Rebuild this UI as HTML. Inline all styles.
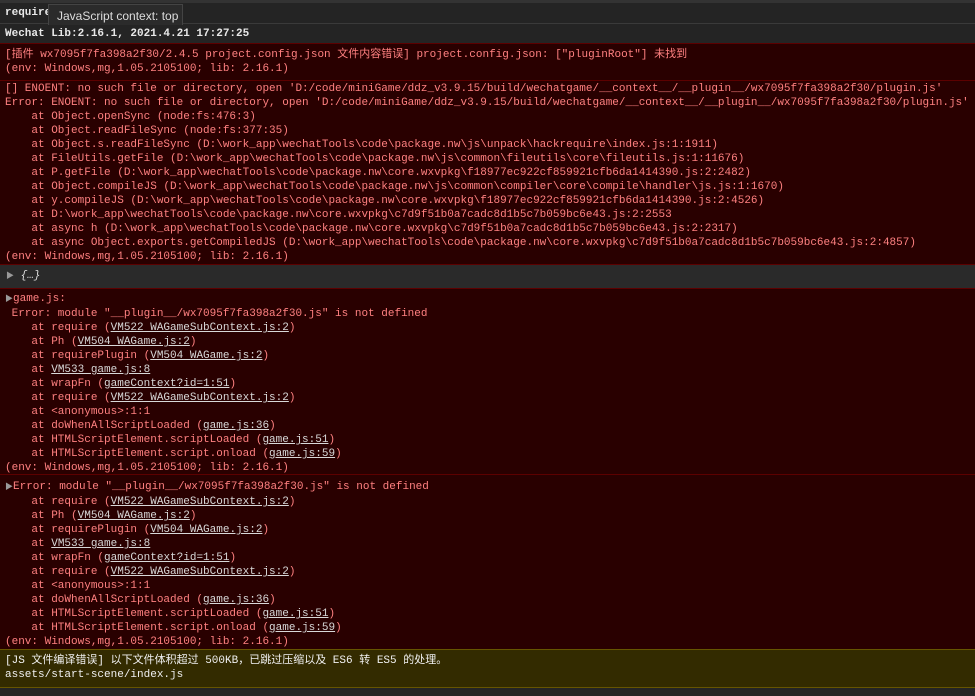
<!DOCTYPE html>
<html><head><meta charset="utf-8"><style>
body{margin:0;width:975px;height:696px;background:#242424;overflow:hidden;font-family:"Liberation Mono","Noto Sans CJK SC",monospace;font-size:11px;position:relative}
.r{position:absolute;left:0;width:975px;box-sizing:border-box}
pre{margin:0;font:inherit;line-height:14px;white-space:pre}
.err{background:#290000;color:#ff8080;border-top:1px solid #5c0000}
u{color:#d8d8d8;text-decoration:underline}
.tri{color:#999;font-size:8px}
</style></head><body>
<div class="r" style="top:0;height:3px;background:#333"></div>
<div class="r" style="top:3px;height:21px;background:#242424;border-bottom:1px solid #3a3a3a"><pre style="color:#e8e8e8;padding:3px 0 0 5px;font-weight:bold">require</pre></div>
<div style="position:absolute;left:48px;top:4px;width:135px;height:24px;background:#2b2b2b;border:1px solid #444;box-sizing:border-box;color:#ddd;font-family:'Liberation Sans',sans-serif;font-size:12px;line-height:22px;padding-left:8px">JavaScript context: top</div>
<div class="r" style="top:25px;height:18px;background:#242424"><pre style="color:#e8e8e8;padding:2px 0 0 5px;font-weight:bold">Wechat Lib:2.16.1, 2021.4.21 17:27:25</pre></div>
<div class="r err" style="top:43px;height:37px;padding:4px 0 0 5px"><pre>[插件 wx7095f7fa398a2f30/2.4.5 project.config.json 文件内容错误] project.config.json: ["pluginRoot"] 未找到
(env: Windows,mg,1.05.2105100; lib: 2.16.1)</pre></div>
<div class="r err" style="top:80px;height:184px;padding:1px 0 0 5px"><pre>[] ENOENT: no such file or directory, open 'D:/code/miniGame/ddz_v3.9.15/build/wechatgame/__context__/__plugin__/wx7095f7fa398a2f30/plugin.js'
Error: ENOENT: no such file or directory, open 'D:/code/miniGame/ddz_v3.9.15/build/wechatgame/__context__/__plugin__/wx7095f7fa398a2f30/plugin.js'
    at Object.openSync (node:fs:476:3)
    at Object.readFileSync (node:fs:377:35)
    at Object.s.readFileSync (D:\work_app\wechatTools\code\package.nw\js\unpack\hackrequire\index.js:1:1911)
    at FileUtils.getFile (D:\work_app\wechatTools\code\package.nw\js\common\fileutils\core\fileutils.js:1:11676)
    at P.getFile (D:\work_app\wechatTools\code\package.nw\core.wxvpkg\f18977ec922cf859921cfb6da1414390.js:2:2482)
    at Object.compileJS (D:\work_app\wechatTools\code\package.nw\js\common\compiler\core\compile\handler\js.js:1:1670)
    at y.compileJS (D:\work_app\wechatTools\code\package.nw\core.wxvpkg\f18977ec922cf859921cfb6da1414390.js:2:4526)
    at D:\work_app\wechatTools\code\package.nw\core.wxvpkg\c7d9f51b0a7cadc8d1b5c7b059bc6e43.js:2:2553
    at async h (D:\work_app\wechatTools\code\package.nw\core.wxvpkg\c7d9f51b0a7cadc8d1b5c7b059bc6e43.js:2:2317)
    at async Object.exports.getCompiledJS (D:\work_app\wechatTools\code\package.nw\core.wxvpkg\c7d9f51b0a7cadc8d1b5c7b059bc6e43.js:2:4857)
(env: Windows,mg,1.05.2105100; lib: 2.16.1)</pre></div>
<div class="r" style="top:264px;height:24px;background:#2a2a2a;border-top:1px solid #5c0000;padding:4px 0 0 6px"><pre style="color:#ddd"><span class="tri">▶</span> <i>{…}</i></pre></div>
<div class="r err" style="top:288px;height:186px;padding:3px 0 0 5px"><pre><span class="tri">▶</span>game.js:
 Error: module "__plugin__/wx7095f7fa398a2f30.js" is not defined
    at require (<u>VM522 WAGameSubContext.js:2</u>)
    at Ph (<u>VM504 WAGame.js:2</u>)
    at requirePlugin (<u>VM504 WAGame.js:2</u>)
    at <u>VM533 game.js:8</u>
    at wrapFn (<u>gameContext?id=1:51</u>)
    at require (<u>VM522 WAGameSubContext.js:2</u>)
    at &lt;anonymous&gt;:1:1
    at doWhenAllScriptLoaded (<u>game.js:36</u>)
    at HTMLScriptElement.scriptLoaded (<u>game.js:51</u>)
    at HTMLScriptElement.script.onload (<u>game.js:59</u>)
(env: Windows,mg,1.05.2105100; lib: 2.16.1)</pre></div>
<div class="r err" style="top:474px;height:175px;padding:5px 0 0 5px"><pre><span class="tri">▶</span>Error: module "__plugin__/wx7095f7fa398a2f30.js" is not defined
    at require (<u>VM522 WAGameSubContext.js:2</u>)
    at Ph (<u>VM504 WAGame.js:2</u>)
    at requirePlugin (<u>VM504 WAGame.js:2</u>)
    at <u>VM533 game.js:8</u>
    at wrapFn (<u>gameContext?id=1:51</u>)
    at require (<u>VM522 WAGameSubContext.js:2</u>)
    at &lt;anonymous&gt;:1:1
    at doWhenAllScriptLoaded (<u>game.js:36</u>)
    at HTMLScriptElement.scriptLoaded (<u>game.js:51</u>)
    at HTMLScriptElement.script.onload (<u>game.js:59</u>)
(env: Windows,mg,1.05.2105100; lib: 2.16.1)</pre></div>
<div class="r" style="top:649px;height:39px;background:#332b00;border-top:1px solid #665500;border-bottom:1px solid #665500;padding:4px 0 0 5px"><pre style="color:#f0f0f0">[JS 文件编译错误] 以下文件体积超过 500KB，已跳过压缩以及 ES6 转 ES5 的处理。
assets/start-scene/index.js</pre></div>
</body></html>
